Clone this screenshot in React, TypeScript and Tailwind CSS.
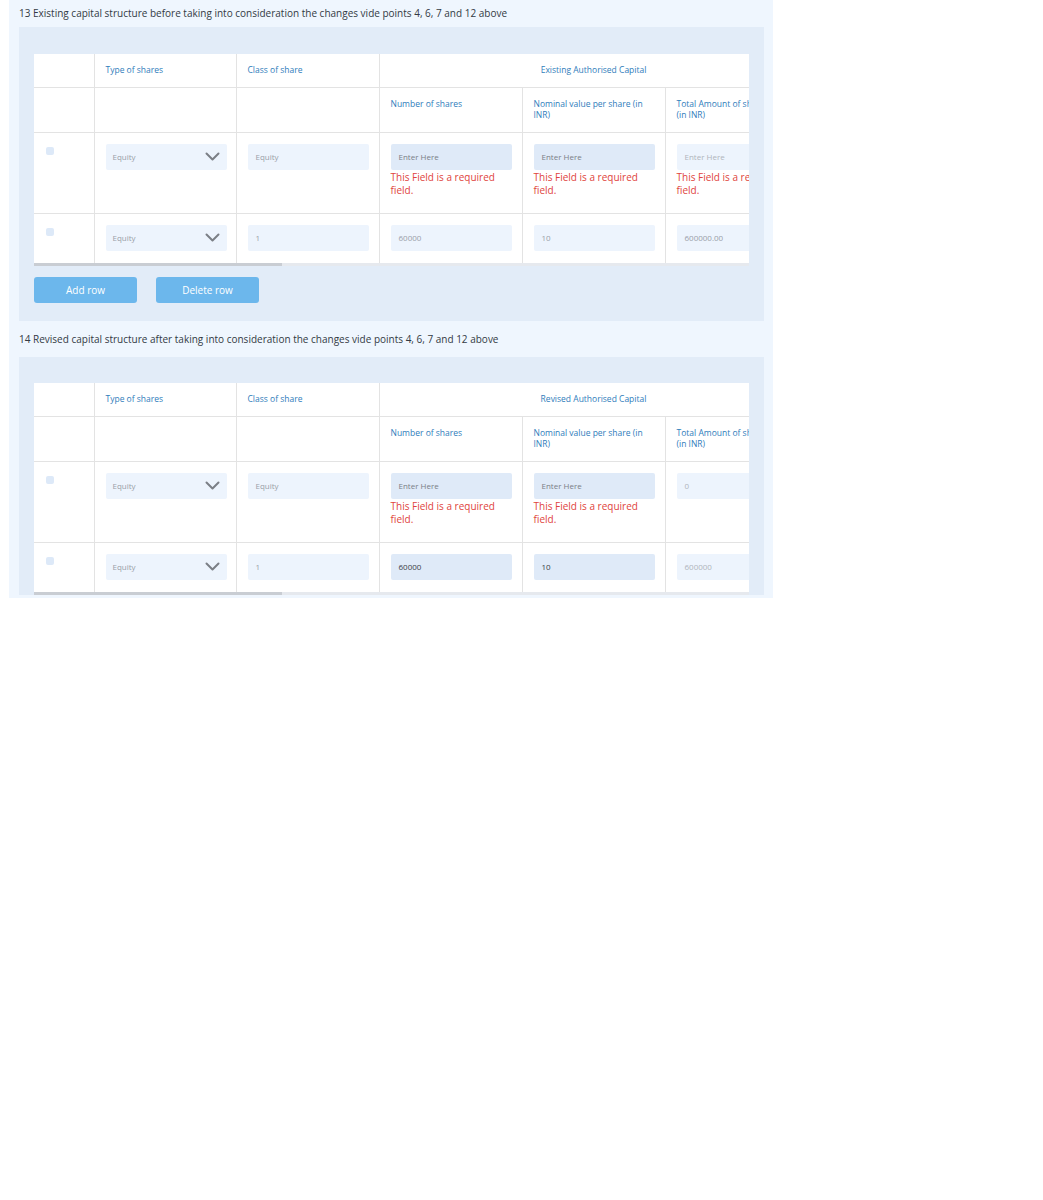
import React from "react";

type Row = {
  klass: string;
  num: string;
  nominal: string;
  total: string;
  numFilled?: boolean;
  nominalFilled?: boolean;
  totalPlaceholder?: boolean;
  numError?: boolean;
  nominalError?: boolean;
  totalError?: boolean;
};

const font = { fontFamily: '"Open Sans", "Liberation Sans", sans-serif' };

function Chevron() {
  return (
    <svg width="15" height="9" viewBox="0 0 15 9" fill="none">
      <path d="M1.5 1.5 L7.5 7.5 L13.5 1.5" stroke="#7b7f86" strokeWidth="2" strokeLinecap="round" strokeLinejoin="round" />
    </svg>
  );
}

function ErrorText() {
  return (
    <p className="mt-[1px] text-[10px] leading-[13px] text-[#e0443c]">
      This Field is a required
      <br />
      field.
    </p>
  );
}

function Field({ value, kind }: { value: string; kind: "placeholder" | "disabled" | "filled" | "faint" }) {
  const cls =
    kind === "placeholder"
      ? "bg-[#dfeaf8] text-[#7a7f87]"
      : kind === "filled"
      ? "bg-[#dfeaf8] text-[#3a3f47]"
      : kind === "faint"
      ? "bg-[#edf4fd] text-[#b0b5bc]"
      : "bg-[#edf4fd] text-[#9aa0a8]";
  return (
    <div className={`flex h-[26px] w-[121px] items-center rounded-[2px] px-[8px] text-[8px] ${cls}`}>{value}</div>
  );
}

function CapitalTable({ title, rows }: { title: string; rows: Row[] }) {
  const th = "border-r border-[#e3e3e3] px-[11px] text-left align-middle text-[8.5px] font-normal text-[#2f7dbb]";
  const td = "border-r border-t border-[#e3e3e3] px-[11px] align-top pt-[11px]";
  return (
    <div>
      <div className="w-[715px] overflow-hidden bg-white">
        <table className="w-[1060px] table-fixed border-collapse">
          <colgroup>
            <col className="w-[60px]" />
            <col className="w-[142px]" />
            <col className="w-[143px]" />
            <col className="w-[143px]" />
            <col className="w-[143px]" />
            <col className="w-[143px]" />
            <col className="w-[143px]" />
            <col className="w-[143px]" />
          </colgroup>
          <thead>
            <tr className="h-[33px]">
              <th className={th}></th>
              <th className={th}>Type of shares</th>
              <th className={th}>Class of share</th>
              <th colSpan={3} className={`${th} text-center`}>
                <span className="block text-center">{title}</span>
              </th>
              <th className={th}></th>
              <th className={th}></th>
            </tr>
            <tr className="h-[45px]">
              <th className={`${th} border-t`}></th>
              <th className={`${th} border-t`}></th>
              <th className={`${th} border-t`}></th>
              <th className={`${th} border-t align-top pt-[10px] leading-[11px]`}>Number of shares</th>
              <th className={`${th} border-t align-top pt-[10px] leading-[11px]`}>Nominal value per share (in INR)</th>
              <th className={`${th} border-t align-top pt-[10px] leading-[11px]`}>
                <span className="whitespace-nowrap">Total Amount of shares</span>
                <br />
                (in INR)
              </th>
              <th className={`${th} border-t`}></th>
              <th className={`${th} border-t`}></th>
            </tr>
          </thead>
          <tbody>
            {rows.map((r, i) => (
              <tr key={i} className={r.numError || r.nominalError ? "h-[81px]" : "h-[50px]"}>
                <td className={td}>
                  <div className="ml-[1px] mt-[3px] h-[8px] w-[8px] rounded-[2px] bg-[#dde9f8]" />
                </td>
                <td className={td}>
                  <div className="flex h-[26px] w-[121px] items-center justify-between rounded-[2px] bg-[#edf4fd] pl-[7px] pr-[7px] text-[8px] text-[#9aa0a8]">
                    Equity
                    <Chevron />
                  </div>
                </td>
                <td className={td}>
                  <Field value={r.klass} kind="disabled" />
                </td>
                <td className={td}>
                  <Field value={r.num} kind={r.numFilled ? "filled" : r.num === "Enter Here" ? "placeholder" : "disabled"} />
                  {r.numError && <ErrorText />}
                </td>
                <td className={td}>
                  <Field value={r.nominal} kind={r.nominalFilled ? "filled" : r.nominal === "Enter Here" ? "placeholder" : "disabled"} />
                  {r.nominalError && <ErrorText />}
                </td>
                <td className={td}>
                  <Field value={r.total} kind={r.totalPlaceholder ? "faint" : "disabled"} />
                  {r.totalError && <ErrorText />}
                </td>
                <td className={td}></td>
                <td className={td}></td>
              </tr>
            ))}
          </tbody>
        </table>
      </div>
      <div className="h-[3px] w-[715px] bg-[#e6e9ee]">
        <div className="h-[3px] w-[248px] bg-[#c9cdd3]" />
      </div>
    </div>
  );
}

export default function App() {
  return (
    <div className="min-h-[1200px] bg-white" style={font}>
      <div className="ml-[9px] h-[598px] w-[764px] overflow-hidden bg-[#eff6fe] pl-[10px] pr-[9px]">
        <div className="flex h-[27px] items-center text-[10px] text-[#333a44]">
          13 Existing capital structure before taking into consideration the changes vide points 4, 6, 7 and 12 above
        </div>
        <div className="bg-[#e2ecf8] px-[15px] pb-[18px] pt-[27px]">
          <CapitalTable
            title="Existing Authorised Capital"
            rows={[
              { klass: "Equity", num: "Enter Here", nominal: "Enter Here", total: "Enter Here", totalPlaceholder: true, numError: true, nominalError: true, totalError: true },
              { klass: "1", num: "60000", nominal: "10", total: "600000.00" },
            ]}
          />
          <div className="mt-[11px] flex gap-[19px]">
            <button className="h-[26px] w-[103px] rounded-[3px] bg-[#6cb7ec] text-[10px] font-medium text-white">Add row</button>
            <button className="h-[26px] w-[103px] rounded-[3px] bg-[#6cb7ec] text-[10px] font-medium text-white">Delete row</button>
          </div>
        </div>
        <div className="flex h-[36px] items-center text-[10px] text-[#333a44]">
          14 Revised capital structure after taking into consideration the changes vide points 4, 6, 7 and 12 above
        </div>
        <div className="bg-[#e2ecf8] px-[15px] pt-[26px]">
          <CapitalTable
            title="Revised Authorised Capital"
            rows={[
              { klass: "Equity", num: "Enter Here", nominal: "Enter Here", total: "0", totalPlaceholder: true, numError: true, nominalError: true },
              { klass: "1", num: "60000", nominal: "10", total: "600000", totalPlaceholder: true, numFilled: true, nominalFilled: true },
            ]}
          />
        </div>
      </div>
    </div>
  );
}
